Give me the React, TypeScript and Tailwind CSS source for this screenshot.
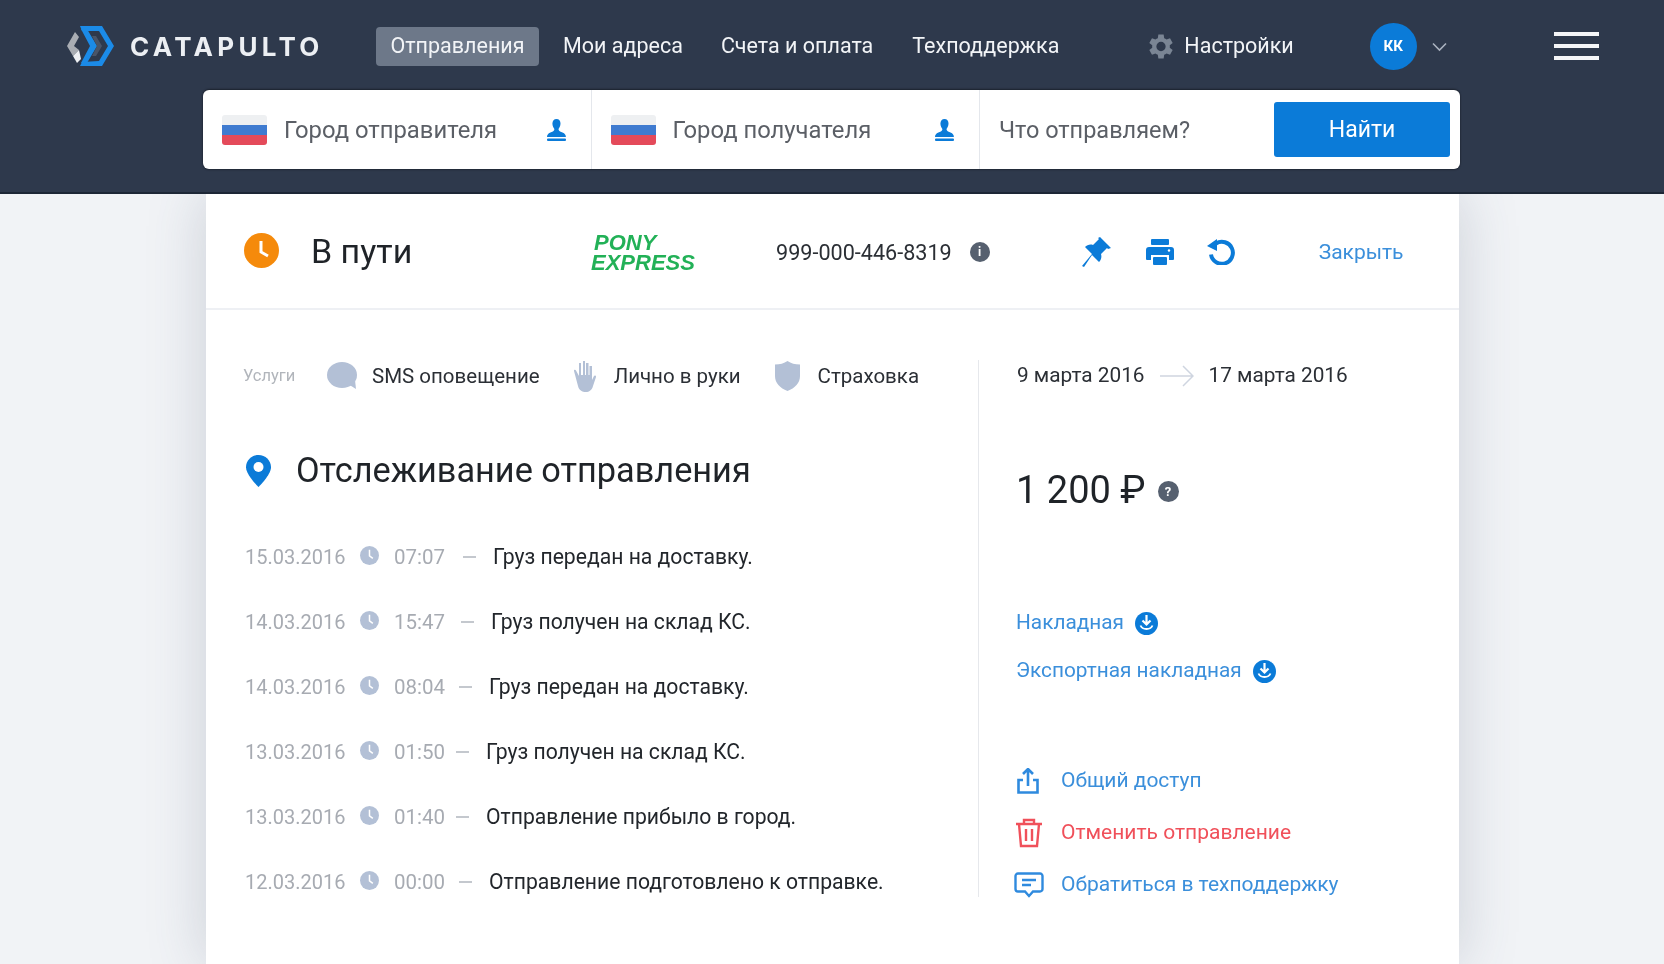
import React from "react";

const Logo = () => (
  <svg width="47" height="40" viewBox="0 0 47 40" className="shrink-0">
    <polygon points="8,6 0,20 6,30 12,24 7,20 12,11" fill="#a9adb3" />
    <polygon points="6,30 10,37 14,33 12,24" fill="#eef0f3" />
    <polygon points="13,0 35,0 47,20 35,40 13,40 15,36 32,35 41,20 32,5 15,5" fill="#1b8be8" />
    <polygon points="14,3 20,3 30,20 20,37 14,37 23,20" fill="#1b8be8" />
    <polygon points="25,10 29,10 35,20 29,30 25,30 30,20" fill="#4a5568" />
  </svg>
);

const Gear = () => (
  <svg width="26" height="27" viewBox="3 2.500 19.600 19" fill="#7a8594" className="shrink-0">
    <path d="M19.400 13a7.600 7.600 0 0 0 0-2l2.200-1.700-2-3.500-2.600 1a7.600 7.600 0 0 0-1.800-1L14.800 3h-4l-.4 2.800a7.600 7.600 0 0 0-1.800 1l-2.600-1-2 3.500L6.200 11a7.600 7.600 0 0 0 0 2L4 14.700l2 3.500 2.600-1a7.600 7.600 0 0 0 1.800 1l.4 2.800h4l.4-2.800a7.600 7.600 0 0 0 1.800-1l2.600 1 2-3.500zM12.800 15.500a3.500 3.500 0 1 1 0-7 3.500 3.500 0 0 1 0 7z" />
  </svg>
);

const Flag = () => (
  <div className="w-[45px] h-[30px] rounded-[3px] overflow-hidden flex flex-col shrink-0">
    <div className="flex-1 bg-[#eef0f2]" />
    <div className="flex-1 bg-[#3f7bd0]" />
    <div className="flex-1 bg-[#e44a5a]" />
  </div>
);

const Pawn = () => (
  <svg width="21" height="22" viewBox="0 0 21 22" fill="#0b7bd8" className="shrink-0">
    <path d="M10.500 0c2.600 0 4 2 4 4.600 0 2.600-1.200 4.400-2 5.400 0 1.600 1 2.400 4 3.600 2.400 1 3.400 2.600 3.400 4.400H1c0-1.800 1-3.400 3.400-4.400 3-1.200 4-2 4-3.600-.8-1-2-2.800-2-5.400C6.500 2 7.900 0 10.500 0z" />
    <rect x="1" y="19.500" width="19" height="2.500" rx="1" />
  </svg>
);

const SearchField = ({ text }: { text: string }) => (
  <div className="w-[388.500px] h-full flex items-center pl-[19px] pr-[24px] border-r border-[#e4e7ec]">
    <Flag />
    <span className="ml-[17px] mt-[2px] text-[23.800px] text-[#5b5f66]">{text}</span>
    <span className="ml-auto flex">
      <Pawn />
    </span>
  </div>
);

const NavLink = ({ children, className = "" }: { children: React.ReactNode; className?: string }) => (
  <a className={"text-[21.500px] text-[#f2f4f7] whitespace-nowrap " + className}>{children}</a>
);

const ClockSmall = () => (
  <svg width="19" height="19" viewBox="0 0 20 20" className="shrink-0 -mt-[2px]">
    <circle cx="10" cy="10" r="10" fill="#b3c0d6" />
    <path d="M10 4v6.500l3.500 2.500" fill="none" stroke="#fff" strokeWidth="1.600" />
  </svg>
);

const rows: [string, string, number, string][] = [
  ["15.03.2016", "07:07", 18, "Груз передан на доставку."],
  ["14.03.2016", "15:47", 16, "Груз получен на склад КС."],
  ["14.03.2016", "08:04", 14, "Груз передан на доставку."],
  ["13.03.2016", "01:50", 11, "Груз получен на склад КС."],
  ["13.03.2016", "01:40", 11, "Отправление прибыло в город."],
  ["12.03.2016", "00:00", 14, "Отправление подготовлено к отправке."],
];

const Row = ({ d, t, g, text }: { d: string; t: string; g: number; text: string }) => (
  <div className="flex items-center h-[65px] whitespace-nowrap">
    <span className="text-[#a7abb2] text-[20px] ml-[2px] w-[115px]">{d}</span>
    <ClockSmall />
    <span className="text-[#a7abb2] text-[20.500px] ml-[15px]">{t}</span>
    <span className="w-[13px] h-[2px] bg-[#c4c8ce] mr-[17px]" style={{ marginLeft: g }} />
    <span className="text-[#22262b] text-[21.150px]">{text}</span>
  </div>
);

const DownloadBadge = () => (
  <svg width="23" height="23" viewBox="0 0 23 23" className="shrink-0">
    <circle cx="11.500" cy="11.500" r="11.500" fill="#0b7bd8" />
    <path d="M11.500 3v8M7.500 8.500l4 4 4-4" fill="none" stroke="#fff" strokeWidth="2.200" />
    <path d="M5.500 13.500c1 2.500 3.300 3.500 6 3.500s5-1 6-3.500" fill="none" stroke="#fff" strokeWidth="1.800" />
  </svg>
);

export default function App() {
  return (
    <div
      className="relative w-[1664px] h-[964px] overflow-hidden bg-[#f1f3f6] flex flex-col blur-[0.4px]"
      style={{ fontFamily: "Roboto, 'Noto Sans', sans-serif" }}
    >
      <header className="relative z-10 h-[194px] shrink-0 bg-[#2e394c] border-b-2 border-[#1d2736] flex flex-col">
        <div className="flex items-center h-[90px] pt-[2px] pl-[67px]">
          <Logo />
          <span
            className="ml-[16px] w-[195px] text-[26px] font-bold tracking-[4.300px] text-[#eceff3] whitespace-nowrap"
            style={{ fontFamily: "Inter, Roboto, sans-serif" }}
          >
            CATAPULTO
          </span>
          <a className="ml-[51px] h-[39px] w-[163px] flex items-center justify-center rounded-[4px] bg-[#6d7889] text-[21.500px] text-[#f2f4f7]">
            Отправления
          </a>
          <NavLink className="ml-[24px]">Мои адреса</NavLink>
          <NavLink className="ml-[38px]">Счета и оплата</NavLink>
          <NavLink className="ml-[39px]">Техподдержка</NavLink>
          <div className="ml-[89px] flex items-center">
            <Gear />
            <NavLink className="ml-[10px]">Настройки</NavLink>
          </div>
          <div className="ml-[76px] w-[47px] h-[47px] rounded-full bg-[#0b7bd8] flex items-center justify-center text-[15px] font-bold text-white">
            КК
          </div>
          <svg width="15" height="10" viewBox="0 0 15 10" className="ml-[15px] mt-[2px]" fill="none" stroke="#aab2bf" strokeWidth="1.600">
            <path d="M1 1.500l6.500 6.500L14 1.500" />
          </svg>
          <div className="ml-[107px] w-[45px] flex flex-col gap-[8px]">
            <div className="h-[4px] bg-[#f5f6f8]" />
            <div className="h-[4px] bg-[#f5f6f8]" />
            <div className="h-[4px] bg-[#f5f6f8]" />
          </div>
        </div>
        <div className="ml-[203px] w-[1257px] h-[79px] bg-white rounded-[6px] flex items-center shadow-[0_-1px_2px_rgba(0,0,0,0.4),0_1px_2px_rgba(0,0,0,0.3)]">
          <SearchField text="Город отправителя" />
          <SearchField text="Город получателя" />
          <span className="ml-[19px] mt-[2px] text-[23.500px] text-[#5b5f66]">Что отправляем?</span>
          <button className="ml-auto mr-[10px] w-[176px] h-[55px] pt-[2px] bg-[#0b7bd8] rounded-[3px] text-[23px] text-white">
            Найти
          </button>
        </div>
      </header>

      <main className="relative ml-[206px] w-[1253px] flex-1 bg-white shadow-[0_0_55px_rgba(70,80,110,0.22)]">
        <div className="h-[116px] border-b-2 border-[#eef0f4] flex items-center pl-[38px]">
          <svg width="35" height="35" viewBox="0 0 35 35" className="shrink-0 -mt-[2px]">
            <circle cx="17.500" cy="17.500" r="17.500" fill="#f58a0b" />
            <path d="M17 8v11l7 4" fill="none" stroke="#fff" strokeWidth="3" />
          </svg>
          <span className="ml-[32px] w-[280px] text-[34px] text-[#1f2328]">В пути</span>
          <div
            className="w-[110px] mt-[3px] text-[22px] leading-[20px] font-bold italic text-[#22b157] indent-[3px]"
            style={{ fontFamily: "'Liberation Sans', sans-serif" }}
          >
            PONY
            <br />
            EXPRESS
          </div>
          <span className="ml-[75px] mt-[4px] text-[21.600px] text-[#2b2f35]">999-000-446-8319</span>
          <span className="ml-[18px] mt-[2px] w-[20px] h-[20px] rounded-full bg-[#56606f] flex items-center justify-center text-[12px] font-bold text-white">
            i
          </span>
          <svg width="30" height="32" viewBox="0 0 30 32" fill="#0b7bd8" className="ml-[92px] mt-[2px]">
            <path d="M18 1l11 11-3 1-1-1-6 6c1 3 0 6-2 8L10 19 2 31 0 30l10-12-7-7c2-2 5-3 8-2l6-6-1-1z" />
          </svg>
          <svg width="28" height="26" viewBox="0 0 28 26" fill="#0b7bd8" className="ml-[34px] mt-[1px]">
            <rect x="5" y="0" width="18" height="6" rx="1" />
            <path d="M3 8h22a3 3 0 0 1 3 3v9a1 1 0 0 1-1 1h-4v-5H5v5H1a1 1 0 0 1-1-1v-9a3 3 0 0 1 3-3z" />
            <rect x="7" y="18" width="14" height="8" rx="1" />
            <circle cx="23" cy="11.500" r="1.200" fill="#fff" />
          </svg>
          <svg width="30" height="28" viewBox="0 0 30 28" fill="none" className="ml-[32px]">
            <path d="M10 6.500a11 11 0 1 1-5 11" stroke="#0b7bd8" strokeWidth="4" />
            <path d="M1 9l10-7v12z" fill="#0b7bd8" />
          </svg>
          <a className="ml-[83px] mt-[4px] text-[21px] text-[#3b8fdb]">Закрыть</a>
        </div>

        <div className="flex mt-[50px]">
          <div className="w-[773px] pl-[37px] border-r border-[#e6e8ec] h-[537px] flex flex-col">
            <div className="flex items-center h-[32px] whitespace-nowrap">
              <span className="text-[16.500px] text-[#b1b5bb] w-[84px]">Услуги</span>
              <svg width="31" height="28" viewBox="0 0 31 28" fill="#b3c0d6" className="shrink-0">
                <ellipse cx="15" cy="13" rx="15" ry="13" />
                <path d="M21 22l8 5-1-9z" />
              </svg>
              <span className="ml-[14px] text-[20.500px] text-[#2b2f35]">SMS оповещение</span>
              <svg width="24" height="32" viewBox="0 0 24 32" fill="#b3c0d6" className="shrink-0 ml-[33px]">
                <path d="M10 1h2v14h1V3h2.500v12h1V6H19v14l2-4c.6-1 2.400-.5 2 1l-3 9c-1 4-4 6-7 6-4 0-7-2-8-6L1 11c-.3-1.200 1.400-1.600 2-.6L6 16V3h2v12h2z" />
              </svg>
              <span className="ml-[17px] text-[20.500px] text-[#2b2f35]">Лично в руки</span>
              <svg width="25" height="30" viewBox="0 0 25 30" fill="#b3c0d6" className="shrink-0 ml-[34px]">
                <path d="M12.500 0C16 2.500 20 3.500 25 3.500V15c0 7-5 12-12.500 15C5 27 0 22 0 15V3.500C5 3.500 9 2.500 12.500 0z" />
              </svg>
              <span className="ml-[18px] text-[20.500px] text-[#2b2f35]">Страховка</span>
            </div>

            <div className="flex items-center mt-[53px]">
              <svg width="25" height="32" viewBox="0 0 25 32" className="ml-[3px] shrink-0">
                <path d="M12.500 0C19.400 0 25 5.500 25 12.300 25 20 12.500 32 12.500 32S0 20 0 12.300C0 5.500 5.600 0 12.500 0z" fill="#0b7bd8" />
                <circle cx="12.500" cy="12" r="5" fill="#fff" />
              </svg>
              <h2 className="ml-[25px] text-[34.300px] font-normal text-[#1f2328] whitespace-nowrap">Отслеживание отправления</h2>
            </div>

            <div className="mt-[28px] flex flex-col">
              {rows.map((r, i) => (
                <Row key={i} d={r[0]} t={r[1]} g={r[2]} text={r[3]} />
              ))}
            </div>
          </div>

          <div className="flex-1 pl-[37px] flex flex-col text-[21px] whitespace-nowrap">
            <div className="flex items-center h-[32px] text-[#2b2f35] text-[20.800px]">
              <span className="ml-[1px]">9 марта 2016</span>
              <svg width="34" height="22" viewBox="0 0 34 22" fill="none" stroke="#cfd5e0" strokeWidth="1.500" className="ml-[15px]">
                <path d="M0 11h33M23 1l10 10-10 10" />
              </svg>
              <span className="ml-[15px]">17 марта 2016</span>
            </div>
            <div className="flex items-center mt-[74px]">
              <span className="text-[38px] leading-[48px] text-[#1f2328]">1 200 ₽</span>
              <span className="ml-[12px] mt-[3px] w-[21px] h-[21px] rounded-full bg-[#56606f] flex items-center justify-center text-[13px] font-bold text-white">
                ?
              </span>
            </div>
            <a className="mt-[96px] h-[26px] flex items-center text-[#3b8fdb] text-[20.800px]">
              Накладная
              <span className="ml-[11px]"><DownloadBadge /></span>
            </a>
            <a className="mt-[22px] h-[26px] flex items-center text-[#3b8fdb] text-[20.800px]">
              Экспортная накладная
              <span className="ml-[11px]"><DownloadBadge /></span>
            </a>
            <a className="mt-[83px] h-[28px] flex items-center text-[#3b8fdb]">
              <svg width="22" height="26" viewBox="0 0 22 26" fill="none" stroke="#2f8ade" strokeWidth="2.600" className="ml-[1px] shrink-0">
                <path d="M11 18V2M6 6l5-5 5 5M6 12H1.500v12.500h19V12H16" />
              </svg>
              <span className="ml-[22px]">Общий доступ</span>
            </a>
            <a className="mt-[24px] h-[28px] flex items-center text-[#f0505a]">
              <svg width="28" height="30" viewBox="0 0 28 30" fill="none" stroke="#f0505a" strokeWidth="2.400" className="-ml-[1px] shrink-0">
                <path d="M1 6h26M9 6V2h10v4M4 6l2 22h16l2-22M11 11v12M17 11v12" />
              </svg>
              <span className="ml-[18px] text-[#f0505a]">Отменить отправление</span>
            </a>
            <a className="mt-[24px] h-[28px] flex items-center text-[#3b8fdb]">
              <svg width="30" height="26" viewBox="0 0 30 26" fill="none" stroke="#2f8ade" strokeWidth="2.400" className="-ml-[2px] shrink-0">
                <path d="M4 1.500h22a2.500 2.500 0 0 1 2.500 2.500v13a2.500 2.500 0 0 1-2.500 2.500H19l-4 4.500-4-4.500H4A2.500 2.500 0 0 1 1.500 17V4A2.500 2.500 0 0 1 4 1.500zM8 8h14M8 13h9" />
              </svg>
              <span className="ml-[17px]">Обратиться в техподдержку</span>
            </a>
          </div>
        </div>
      </main>
    </div>
  );
}
